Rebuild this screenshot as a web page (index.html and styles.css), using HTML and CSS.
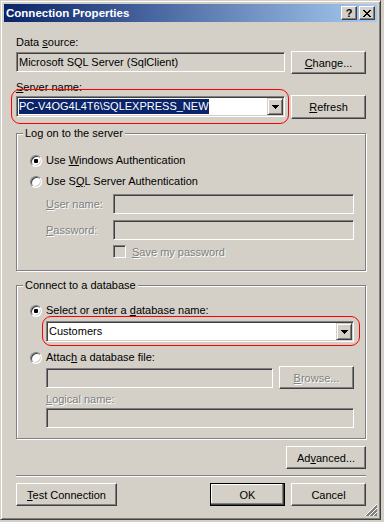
FILE: index.html
```html
<!DOCTYPE html>
<html lang="en">
  <head>
    <meta charset="UTF-8" />
    <title>Connection Properties</title>
    <link rel="stylesheet" href="styles.css">
  </head>

  <body>
    <div class="window">
      <div class="titlebar">
        <span class="title">Connection Properties</span>
        <div class="caption-buttons">
          <span class="cap-btn">?</span>
          <span class="cap-btn">
            <svg width="8" height="7" viewBox="0 0 8 7" shape-rendering="crispEdges">
              <path d="M0 0h2v1H0zM6 0h2v1H6zM1 1h2v1H1zM5 1h2v1H5zM2 2h4v1H2zM3 3h2v1H3zM2 4h4v1H2zM1 5h2v1H1zM5 5h2v1H5zM0 6h2v1H0zM6 6h2v1H6z" fill="#000"/>
            </svg>
          </span>
        </div>
      </div>

      <div class="content">
        <div class="label label-source">Data <u>s</u>ource:</div>
        <div class="row row-source">
          <div class="textbox readonly wide">Microsoft SQL Server (SqlClient)</div>
          <button class="btn"><u>C</u>hange...</button>
        </div>

        <div class="label label-server"><u>S</u>erver name:</div>
        <div class="row row-server">
          <div class="combo wide">
            <span class="combo-text"><span class="selected">PC-V4OG4L4T6\SQLEXPRESS_NEW</span></span>
            <span class="combo-btn">
              <svg width="7" height="4" viewBox="0 0 7 4" shape-rendering="crispEdges">
                <path d="M0 0h7v1H0zM1 1h5v1H1zM2 2h3v1H2zM3 3h1v1H3z" fill="#000"/>
              </svg>
            </span>
            <span class="mark mark-server"></span>
          </div>
          <button class="btn btn-refresh"><u>R</u>efresh</button>
        </div>

        <div class="group group-logon">
          <div class="group-title">Log on to the server</div>
          <div class="option option-first">
            <span class="radio checked"></span>
            <span>Use <u>W</u>indows Authentication</span>
          </div>
          <div class="option option-next">
            <span class="radio"></span>
            <span>Use S<u>Q</u>L Server Authentication</span>
          </div>
          <div class="field field-user">
            <span class="field-label disabled"><u>U</u>ser name:</span>
            <div class="textbox off field-box"></div>
          </div>
          <div class="field field-pass">
            <span class="field-label disabled"><u>P</u>assword:</span>
            <div class="textbox off field-box"></div>
          </div>
          <div class="check">
            <span class="checkbox"></span>
            <span class="disabled"><u>S</u>ave my password</span>
          </div>
        </div>

        <div class="group group-db">
          <div class="group-title">Connect to a database</div>
          <div class="option option-db">
            <span class="radio checked"></span>
            <span>Select or enter a <u>d</u>atabase name:</span>
          </div>
          <div class="combo combo-db">
            <span class="combo-text">Customers</span>
            <span class="combo-btn">
              <svg width="7" height="4" viewBox="0 0 7 4" shape-rendering="crispEdges">
                <path d="M0 0h7v1H0zM1 1h5v1H1zM2 2h3v1H2zM3 3h1v1H3z" fill="#000"/>
              </svg>
            </span>
            <span class="mark mark-db"></span>
          </div>
          <div class="option option-attach">
            <span class="radio"></span>
            <span>Attac<u>h</u> a database file:</span>
          </div>
          <div class="attach-row">
            <div class="textbox off attach-box"></div>
            <button class="btn btn-off"><u>B</u>rowse...</button>
          </div>
          <div class="label label-logical disabled"><u>L</u>ogical name:</div>
          <div class="textbox off logical-box"></div>
        </div>

        <button class="btn btn-advanced">Ad<u>v</u>anced...</button>
        <div class="separator"></div>

        <div class="footer">
          <button class="btn btn-test"><u>T</u>est Connection</button>
          <button class="btn btn-ok">OK</button>
          <button class="btn">Cancel</button>
        </div>
      </div>

      <svg class="grip" width="12" height="12" viewBox="0 0 12 12" shape-rendering="crispEdges">
        <path d="M12 0.5L0.5 12M12 4.5L4.5 12M12 8.5L8.5 12" stroke="#fff" fill="none"/>
        <path d="M12 1.5L1.5 12M12 2.5L2.5 12M12 5.5L5.5 12M12 6.5L6.5 12M12 9.5L9.5 12M12 10.5L10.5 12" stroke="#808080" fill="none"/>
      </svg>
    </div>
  </body>
</html>
```

FILE: styles.css
```css
* {
  margin: 0;
  padding: 0;
  box-sizing: border-box;
  font-family: "Liberation Sans", Arial, sans-serif;
  font-size: 11px;
}

body {
  background: #d4d0c8;
  color: #000;
}

.window {
  position: relative;
  width: 381px;
  height: 520px;
  padding: 3px;
  background: #d4d0c8;
  border: 1px solid;
  border-color: #d4d0c8 #404040 #404040 #d4d0c8;
  box-shadow: inset 1px 1px #fff, inset -1px -1px #808080;
}

/* title bar */
.titlebar {
  height: 18px;
  display: flex;
  align-items: center;
  padding: 0 2px;
  background: linear-gradient(to right, #0a246a, #a6caf0);
}

.title {
  color: #fff;
  font-weight: bold;
  font-size: 11.5px;
}

.caption-buttons {
  margin-left: auto;
  display: flex;
  gap: 2px;
}

.cap-btn {
  width: 16px;
  height: 14px;
  display: flex;
  align-items: center;
  justify-content: center;
  background: #d4d0c8;
  border: 1px solid;
  border-color: #fff #404040 #404040 #fff;
  box-shadow: inset -1px -1px #808080;
  font-weight: bold;
  line-height: 12px;
}

/* main column */
.content {
  display: flex;
  flex-direction: column;
  padding: 0 11px 0 12px;
}

.label {
  line-height: 13px;
}

.label-source {
  margin-top: 14px;
}

.label-server {
  margin-top: 7px;
}

.row {
  display: flex;
  justify-content: space-between;
  align-items: flex-start;
}

.row-source {
  margin-top: 2px;
}

.row-source .textbox {
  margin-top: 1px;
}

.row-server {
  margin-top: 1px;
}

.row-server .combo {
  margin-top: 1px;
}

.wide {
  width: 269px;
}

/* controls */
.textbox {
  height: 20px;
  padding: 1px 2px;
  line-height: 16px;
  background: #fff;
  border: 1px solid;
  border-color: #808080 #fff #fff #808080;
  box-shadow: inset 1px 1px #404040, inset -1px -1px #d4d0c8;
  white-space: nowrap;
}

.textbox.readonly,
.textbox.off {
  background: #d4d0c8;
}

.btn {
  width: 75px;
  height: 23px;
  text-align: center;
  line-height: 20px;
  background: #d4d0c8;
  color: #000;
  border: 1px solid;
  border-color: #fff #404040 #404040 #fff;
  box-shadow: inset -1px -1px #808080;
  cursor: default;
}

.btn-refresh {
  height: 24px;
  line-height: 21px;
}

.btn-off {
  color: #808080;
  text-shadow: 1px 1px #fff;
}

.combo {
  position: relative;
  height: 21px;
  display: flex;
  padding: 1px;
  background: #fff;
  border: 1px solid;
  border-color: #808080 #fff #fff #808080;
  box-shadow: inset 1px 1px #404040, inset -1px -1px #d4d0c8;
}

.combo-text {
  flex: 1;
  padding: 1px 0 0 1px;
  line-height: 15px;
  white-space: nowrap;
}

.selected {
  display: inline-block;
  background: #0a246a;
  color: #fff;
  line-height: 15px;
}

.combo-btn {
  width: 16px;
  height: 17px;
  display: flex;
  align-items: center;
  justify-content: center;
  background: #d4d0c8;
  border: 1px solid;
  border-color: #d4d0c8 #404040 #404040 #d4d0c8;
  box-shadow: inset 1px 1px #fff, inset -1px -1px #808080;
}

/* red highlight marks drawn over the screenshot */
.mark {
  position: absolute;
  border: 1px solid #f00;
  border-radius: 9px;
  pointer-events: none;
}

.mark-server {
  left: -6px;
  top: -8px;
  right: -5px;
  bottom: -8px;
}

.mark-db {
  left: -5px;
  top: -6px;
  right: -7px;
  bottom: -5px;
}

/* group boxes */
.group {
  display: flex;
  flex-direction: column;
  margin-top: 14px;
  border: 1px solid #808080;
  box-shadow: inset 1px 1px #fff, 1px 1px #fff;
}

.group-logon {
  padding-bottom: 12px;
}

.group-db {
  padding-bottom: 10px;
}

.group-title {
  align-self: flex-start;
  margin: -7px 0 0 6px;
  padding: 0 2px;
  line-height: 13px;
  background: #d4d0c8;
}

.option {
  display: flex;
  align-items: center;
  gap: 4px;
  height: 13px;
  line-height: 13px;
  margin-left: 13px;
  white-space: nowrap;
}

.option-first {
  margin-top: 14px;
}

.option-next {
  margin-top: 8px;
}

.option-db {
  margin-top: 12px;
}

.option-attach {
  margin-top: 9px;
}

.radio {
  position: relative;
  flex: none;
  width: 12px;
  height: 12px;
  border-radius: 50%;
  background: #fff;
  border: 1px solid;
  border-color: #808080 #fff #fff #808080;
  box-shadow: inset 1px 1px #404040, inset -1px -1px #d4d0c8;
}

.radio.checked::after {
  content: "";
  position: absolute;
  left: 3px;
  top: 3px;
  width: 4px;
  height: 4px;
  border-radius: 1px;
  background: #000;
}

.disabled {
  color: #808080;
  text-shadow: 1px 1px #fff;
}

.field {
  display: flex;
  align-items: center;
  margin: 6px 0 0 29px;
}

.field-label {
  width: 67px;
}

.field-box {
  width: 241px;
}

.check {
  display: flex;
  align-items: center;
  gap: 6px;
  height: 13px;
  margin: 5px 0 0 96px;
}

.checkbox {
  width: 13px;
  height: 13px;
  background: #d4d0c8;
  border: 1px solid;
  border-color: #808080 #fff #fff #808080;
  box-shadow: inset 1px 1px #404040, inset -1px -1px #d4d0c8;
}

.combo-db {
  width: 308px;
  margin: 4px 0 0 29px;
}

.attach-row {
  display: flex;
  align-items: center;
  gap: 6px;
  height: 23px;
  margin: 2px 0 0 29px;
}

.attach-box {
  width: 227px;
}

.label-logical {
  margin: 4px 0 0 29px;
}

.logical-box {
  width: 308px;
  margin: 2px 0 0 29px;
}

/* bottom */
.btn-advanced {
  align-self: flex-end;
  width: 80px;
  margin-top: 7px;
}

.separator {
  height: 2px;
  margin-top: 6px;
  border-top: 1px solid #808080;
  border-bottom: 1px solid #fff;
}

.footer {
  display: flex;
  gap: 6px;
  margin-top: 6px;
}

.btn-test {
  width: 101px;
}

.btn-ok {
  margin-left: auto;
  border-color: #000;
  box-shadow: inset -1px -1px #404040, inset -2px -2px #808080, inset 1px 1px #fff;
}

.grip {
  position: absolute;
  right: 3px;
  bottom: 3px;
}
```
